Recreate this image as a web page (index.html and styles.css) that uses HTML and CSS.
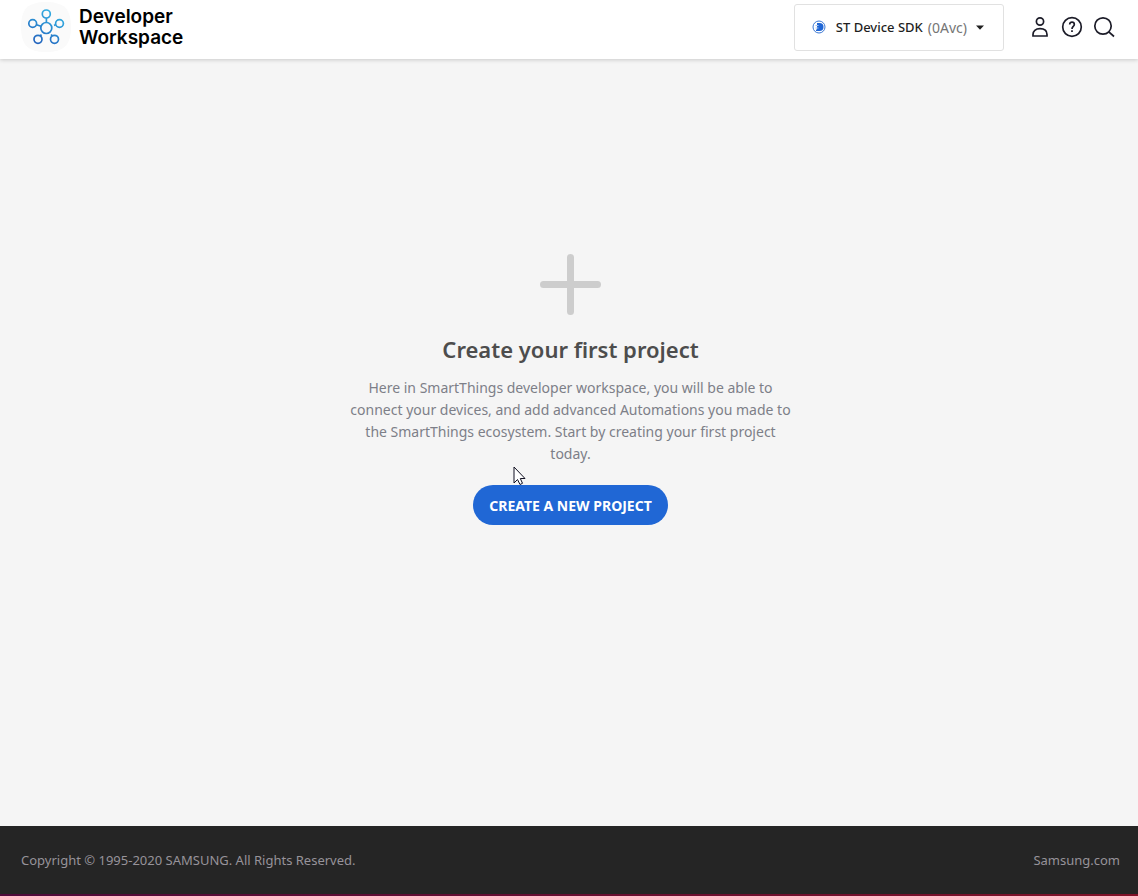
FILE: index.html
```html
<!DOCTYPE html>
<html lang="en">
<head>
<meta charset="utf-8">
<meta name="viewport" content="width=device-width, initial-scale=1">
<title>Developer Workspace</title>
<link rel="stylesheet" href="styles.css">
</head>
<body>
<header class="header">
  <a class="brand" href="#">
    <svg class="brand-mark" viewBox="0 0 50 50" aria-hidden="true">
      <defs>
        <linearGradient id="hub" gradientUnits="userSpaceOnUse" x1="34" y1="8" x2="16" y2="42">
          <stop offset="0" stop-color="#34b3e4"/>
          <stop offset="1" stop-color="#2262bd"/>
        </linearGradient>
      </defs>
      <path d="M25 0C43 0 50 7 50 25S43 50 25 50 0 43 0 25 7 0 25 0Z" fill="#fafafa"/>
      <g fill="none" stroke="url(#hub)" stroke-width="1.7">
        <circle cx="25.300" cy="26" r="5.500"/>
        <circle cx="25.300" cy="12" r="4"/>
        <circle cx="11.700" cy="21.500" r="3.900"/>
        <circle cx="38.500" cy="21.500" r="3.900"/>
        <circle cx="17" cy="37.300" r="4"/>
        <circle cx="33.500" cy="37.300" r="4"/>
        <path d="M25.400 16V20.500M15.500 22.800L20 24.300M34.700 22.800L33 23.400M19.300 34.200L20.400 32.600M31.300 34L30.100 32.400"/>
      </g>
    </svg>
    <span class="brand-name">Developer<br>Workspace</span>
  </a>
  <div class="tools">
    <button class="project-picker" type="button" aria-haspopup="listbox">
      <svg class="project-icon" viewBox="0 0 14 14" aria-hidden="true">
        <circle cx="7" cy="7" r="6" fill="#fff" stroke="#3b78d3"/>
        <path d="M5 3H7.500a4 4 0 0 1 0 8H4V9.500H5Z" fill="#1f66d6"/>
        <path d="M3.500 5.500H6.500M3.500 8H6.500" stroke="#a9c6f2"/>
      </svg>
      <span class="project-name">ST Device SDK</span>
      <span class="project-code">(0Avc)</span>
      <svg class="caret" viewBox="0 0 8 5" aria-hidden="true"><path d="M0 .5H8L4 4.700Z" fill="#1f1f1f"/></svg>
    </button>
    <nav class="actions" aria-label="Account and help">
      <button class="icon-button" type="button" aria-label="Account">
        <svg viewBox="0 0 24 24"><circle cx="12" cy="6.500" r="3.600"/><path d="M5 21V19.500C5 16 7.500 13.700 12 13.700S19 16 19 19.500V21Z"/></svg>
      </button>
      <button class="icon-button" type="button" aria-label="Help">
        <svg viewBox="0 0 24 24"><circle cx="12" cy="12" r="9.300"/><path d="M9.700 9.500C9.700 7.800 10.700 7.200 12 7.200S14.300 8 14.300 9.500C14.300 11.500 12 11.500 12 14M12 15.200V17"/></svg>
      </button>
      <button class="icon-button" type="button" aria-label="Search">
        <svg viewBox="0 0 24 24"><circle cx="11" cy="11" r="8.200"/><path d="M16.800 16.800L22 21.500"/></svg>
      </button>
    </nav>
  </div>
</header>
<main class="main">
  <section class="empty">
    <svg class="plus" viewBox="0 0 61 61" aria-hidden="true"><path d="M30.500 3.500V57.500M3.500 30.500H57.500"/></svg>
    <h1 class="title">Create your first project</h1>
    <p class="intro">Here in SmartThings developer workspace, you will be able to connect your devices, and add advanced Automations you made to the SmartThings ecosystem. Start by creating your first project today.</p>
    <div class="cta-wrap">
      <button class="cta" type="button">CREATE A NEW PROJECT</button>
      <svg class="cursor" viewBox="0 0 13 19" aria-hidden="true"><path d="M1 1V17L4.500 13.500L7 18.500L9.500 17.300L7.300 12.500H12Z" fill="#fff" stroke="#111122"/></svg>
    </div>
  </section>
</main>
<footer class="footer">
  <span>Copyright © 1995-2020 SAMSUNG. All Rights Reserved.</span>
  <a class="footer-link" href="#">Samsung.com</a>
</footer>
</body>
</html>
```
FILE: styles.css
```css
* { box-sizing: border-box; }
body {
  margin: 0;
  min-height: 100vh;
  display: flex;
  flex-direction: column;
  background: #f5f5f5;
  font-family: "Noto Sans", sans-serif;
}
button { font: inherit; cursor: pointer; }
.header {
  display: flex;
  justify-content: space-between;
  align-items: flex-start;
  min-height: 59px;
  padding: 2px 22px 0 21px;
  background: #fff;
  box-shadow: 0 1px 4px rgba(0, 0, 0, .18);
}
.brand {
  display: flex;
  align-items: center;
  gap: 8px;
  color: #000;
  text-decoration: none;
}
.brand-mark { width: 50px; height: 50px; }
.brand-name {
  font: 600 19px/21px Inter, sans-serif;
}
.tools { display: flex; align-items: center; gap: 24px; padding-top: 2px; }
.project-picker {
  display: flex;
  align-items: center;
  height: 47px;
  padding: 0 19px 1px 17px;
  border: 1px solid #e1e1e1;
  border-radius: 3px;
  background: #fff;
  color: #1f1f1f;
  font-size: 13px;
  white-space: nowrap;
}
.project-icon { width: 14px; height: 14px; margin-right: 10px; }
.project-name { font-weight: 500; }
.project-code { margin-left: 5px; color: #757575; font-size: 14px; }
.caret { width: 8px; height: 5px; margin-left: 9px; }
.actions { display: flex; gap: 8px; padding-bottom: 1px; }
.icon-button {
  width: 24px;
  height: 24px;
  padding: 0;
  border: 0;
  background: none;
}
.icon-button svg {
  display: block;
  width: 24px;
  height: 24px;
  fill: none;
  stroke: #1c1c28;
  stroke-width: 1.7;
}
.main {
  flex: 1;
  display: flex;
  justify-content: center;
  padding: 195px 16px 32px 19px;
}
.empty {
  width: 100%;
  max-width: 446px;
  text-align: center;
}
.plus {
  display: block;
  width: 61px;
  height: 61px;
  margin: 0 auto;
  stroke: #cdcdcd;
  stroke-width: 7;
  stroke-linecap: round;
}
.title {
  margin: 18px 0 12px;
  color: #4d4d4d;
  font-size: 22px;
  font-weight: 600;
  line-height: 32px;
}
.intro {
  margin: 0 0 20px;
  color: #7d7f88;
  font-size: 14px;
  line-height: 22px;
}
.cta-wrap { position: relative; width: max-content; margin: 0 auto; }
.cta {
  height: 40px;
  padding: 0 16px;
  border: 0;
  border-radius: 20px;
  background: #2067d5;
  color: #fff;
  font-size: 14px;
  font-weight: 700;
}
.cursor { position: absolute; left: 40px; top: -19px; width: 13px; height: 19px; }
.footer {
  display: flex;
  justify-content: space-between;
  align-items: center;
  min-height: 70px;
  padding: 0 18px 0 21px;
  border-bottom: 2px solid;
  border-image: linear-gradient(to right, #4e0a3a, #7f1228) 1;
  background: #252525;
  color: #97939a;
  font-size: 13px;
}
.footer-link { color: inherit; text-decoration: none; }
```
